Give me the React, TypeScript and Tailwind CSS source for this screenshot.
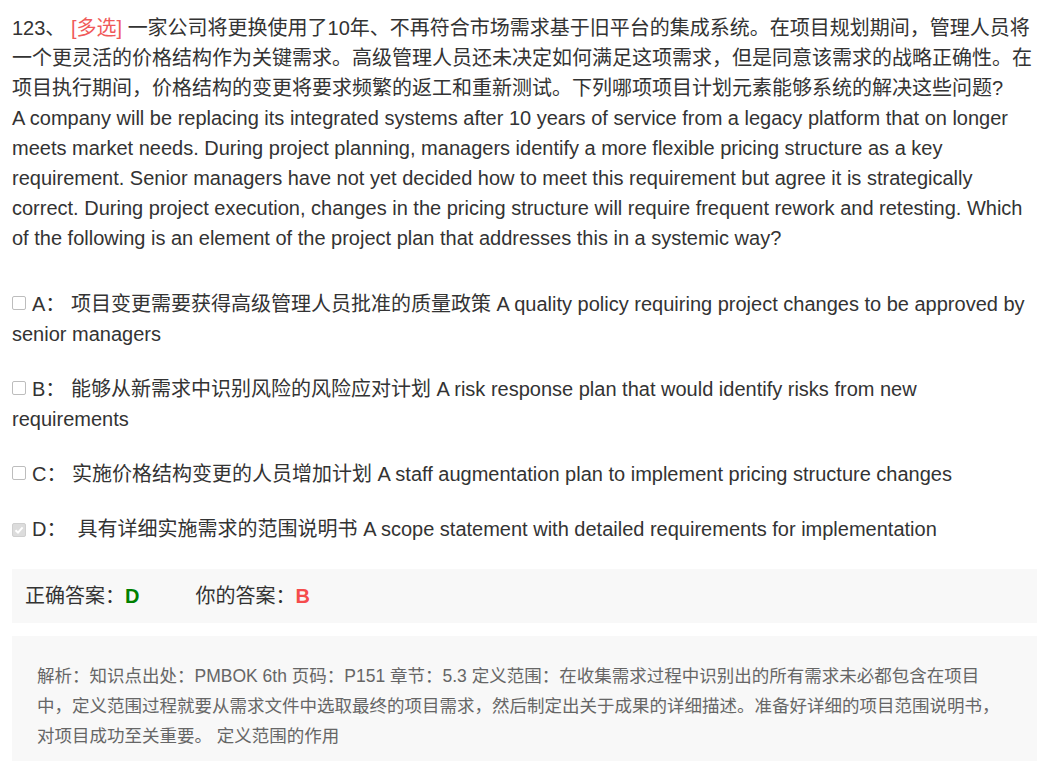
import React from "react";

const font = {
  fontFamily: '"Liberation Sans", Arial, "Noto Sans CJK SC", sans-serif',
};

function Box({ checked }: { checked?: boolean }) {
  if (checked) {
    return (
      <span className="inline-flex items-center justify-center w-[14px] h-[14px] rounded-[2px] bg-[#dcdcdc] border border-[#cfcfcf] align-[1px] mr-[6px]">
        <svg width="10" height="10" viewBox="0 0 10 10">
          <path d="M1.5 5.2 L4 7.6 L8.6 2.4" fill="none" stroke="#ffffff" strokeWidth="2" />
        </svg>
      </span>
    );
  }
  return (
    <span className="inline-block w-[14px] h-[14px] rounded-[2px] bg-white border border-[#bdbdbd] align-[1px] mr-[6px]" />
  );
}

export default function App() {
  return (
    <div
      className="w-[1050px] min-h-[761px] bg-white pl-[12px] pr-[13px] pt-[13px] text-[#333333] text-[20px] leading-[30px]"
      style={font}
    >
      <div className="mb-[36px]">
        123、 <span className="text-[#f05a5a]">[多选]</span>{" "}
        一家公司将更换使用了10年、不再符合市场需求基于旧平台的集成系统。在项目规划期间，管理人员将一个更灵活的价格结构作为关键需求。高级管理人员还未决定如何满足这项需求，但是同意该需求的战略正确性。在项目执行期间，价格结构的变更将要求频繁的返工和重新测试。下列哪项项目计划元素能够系统的解决这些问题?
        <br />
        A company will be replacing its integrated systems after 10 years of service from a legacy platform that on longer meets market needs. During project planning, managers identify a more flexible pricing structure as a key requirement. Senior managers have not yet decided how to meet this requirement but agree it is strategically correct. During project execution, changes in the pricing structure will require frequent rework and retesting. Which of the following is an element of the project plan that addresses this in a systemic way?
      </div>

      <div className="mb-[25px]">
        <Box />A： 项目变更需要获得高级管理人员批准的质量政策 A quality policy requiring project changes to be approved by senior managers
      </div>
      <div className="mb-[25px]">
        <Box />B： 能够从新需求中识别风险的风险应对计划 A risk response plan that would identify risks from new requirements
      </div>
      <div className="mb-[25px]">
        <Box />C： 实施价格结构变更的人员增加计划 A staff augmentation plan to implement pricing structure changes
      </div>
      <div className="mb-[25px]">
        <Box checked />D：{"\u00a0"} 具有详细实施需求的范围说明书 A scope statement with detailed requirements for implementation
      </div>

      <div className="bg-[#f8f8f8] px-[13px] py-[12px] mb-[13px]">
        正确答案：<span className="font-bold text-[#008000]">D</span>
        <span className="ml-[56px]">你的答案：</span>
        <span className="font-bold text-[#f54c4c]">B</span>
      </div>

      <div className="bg-[#f8f8f8] pl-[25px] pr-[20px] pt-[25px] pb-[30px] text-[17.5px] leading-[30px] text-[#666666]">
        解析：知识点出处：PMBOK 6th 页码：P151 章节：5.3 定义范围：在收集需求过程中识别出的所有需求未必都包含在项目
        <br />
        中，定义范围过程就要从需求文件中选取最终的项目需求，然后制定出关于成果的详细描述。准备好详细的项目范围说明书，
        <br />
        对项目成功至关重要。 定义范围的作用
      </div>
    </div>
  );
}
